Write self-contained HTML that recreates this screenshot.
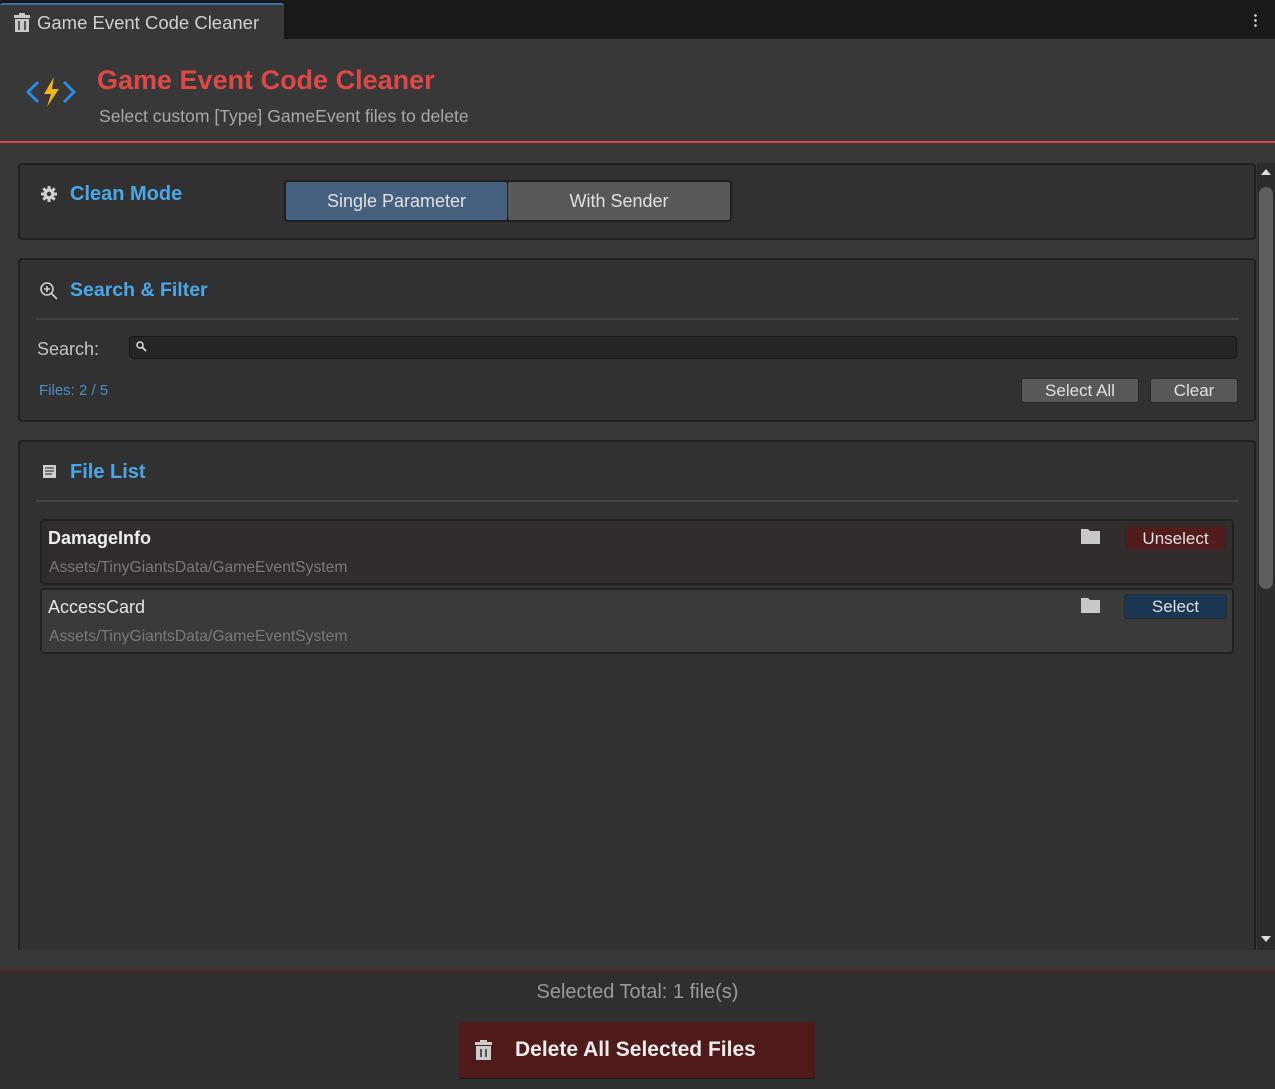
<!DOCTYPE html>
<html><head><meta charset="utf-8"><style>
*{box-sizing:border-box;margin:0;padding:0}
body{width:1275px;height:1089px;background:#383838;font-family:"Liberation Sans",sans-serif;position:relative;overflow:hidden;color:#d2d2d2}
.a{position:absolute}
.panel{position:absolute;left:18px;width:1238px;background:#313131;border:2px solid #202020;border-radius:4px}
.h{color:#4aa8e8;font-weight:bold;font-size:20px}
.btn{position:absolute;background:#585858;border:1px solid #2a2a2a;border-radius:3px;color:#e0e0e0;font-size:17px;text-align:center}
</style></head><body>
<div class="a" style="left:0;top:0;width:1275px;height:39px;background:#191919"></div>
<div class="a" style="left:0;top:3px;width:284px;height:36px;background:#383838;border-top:2px solid #3d6fa8;border-radius:3px 3px 0 0"></div>
<svg class="a" style="left:13px;top:13px" width="18" height="19" viewBox="0 0 18 19"><rect x="1" y="2" width="16" height="3" fill="#c8c8c8"/><rect x="6" y="0" width="6" height="2" fill="#c8c8c8"/><rect x="2" y="6" width="14" height="13" fill="#c8c8c8"/><rect x="5" y="8" width="2" height="9" fill="#555"/><rect x="11" y="8" width="2" height="9" fill="#555"/></svg>
<div class="a" style="left:37px;top:12px;font-size:18.5px;color:#d0d0d0">Game Event Code Cleaner</div>
<div class="a" style="left:1254px;top:13px;width:3px;height:15px;background:radial-gradient(circle,#ccc 1.2px,transparent 1.5px) 0 0/3px 5px"></div>

<svg class="a" style="left:26px;top:76px" width="50" height="32" viewBox="0 0 50 32"><path d="M12 6 L2 16 L12 26" stroke="#2a8be0" stroke-width="3" fill="none"/><path d="M38 6 L48 16 L38 26" stroke="#2a8be0" stroke-width="3" fill="none"/><path d="M28 1 L18 18 H25 L21 31 L33 13 H26 Z" fill="#f5b21f"/></svg>
<div class="a" style="left:97px;top:65px;font-size:27px;font-weight:bold;color:#e04848">Game Event Code Cleaner</div>
<div class="a" style="left:99px;top:106px;font-size:17.6px;color:#a8a8a8">Select custom [Type] GameEvent files to delete</div>
<div class="a" style="left:0;top:141px;width:1275px;height:2px;background:#d84646"></div>

<div class="panel" style="top:163px;height:77px"></div>
<svg class="a" style="left:41px;top:186px" width="16" height="16" viewBox="0 0 16 16"><circle cx="8" cy="8" r="5.5" fill="#cfcfcf"/><g stroke="#cfcfcf" stroke-width="3"><path d="M8 0V16M0 8H16M2.3 2.3L13.7 13.7M13.7 2.3L2.3 13.7"/></g><circle cx="8" cy="8" r="2.2" fill="#313131"/></svg>
<div class="a h" style="left:70px;top:183px">Clean Mode</div>
<div class="a" style="left:284px;top:180px;width:448px;height:42px;background:#1e1e1e;border-radius:3px"></div>
<div class="a" style="left:286px;top:182px;width:221px;height:38px;background:#46607f;border-radius:2px;color:#e0e0e0;font-size:18px;text-align:center;line-height:38px">Single Parameter</div>
<div class="a" style="left:508px;top:182px;width:222px;height:38px;background:#585858;border-radius:2px;color:#e0e0e0;font-size:18px;text-align:center;line-height:38px">With Sender</div>

<div class="panel" style="top:258px;height:164px"></div>
<svg class="a" style="left:39px;top:281px" width="20" height="20" viewBox="0 0 20 20"><circle cx="8" cy="8" r="6" stroke="#cfcfcf" stroke-width="1.6" fill="none"/><path d="M12.5 12.5L18 18M8 5V11M5 8H11" stroke="#cfcfcf" stroke-width="1.6"/></svg>
<div class="a h" style="left:70px;top:279px;font-size:19.5px">Search &amp; Filter</div>
<div class="a" style="left:36px;top:318px;width:1203px;height:2px;background:#444"></div>
<div class="a" style="left:37px;top:339px;font-size:18px;color:#c4c4c4">Search:</div>
<div class="a" style="left:129px;top:336px;width:1108px;height:23px;background:#252525;border:1px solid #161616;border-radius:4px"></div>
<svg class="a" style="left:136px;top:341px" width="11" height="11" viewBox="0 0 11 11"><circle cx="4" cy="4" r="3" stroke="#ddd" stroke-width="1.5" fill="none"/><path d="M6 6L10 10" stroke="#ddd" stroke-width="1.8"/></svg>
<div class="a" style="left:39px;top:382px;font-size:15px;color:#4d8fd0">Files: 2 / 5</div>
<div class="btn" style="left:1021px;top:378px;width:118px;height:25px;line-height:24px">Select All</div>
<div class="btn" style="left:1150px;top:378px;width:88px;height:25px;line-height:24px">Clear</div>

<div class="panel" style="top:440px;height:520px;border-bottom:none"></div>
<svg class="a" style="left:43px;top:465px" width="13" height="13" viewBox="0 0 13 13"><rect width="13" height="13" fill="#cfcfcf"/><path d="M2 3H11M2 6H11M2 9H9" stroke="#444" stroke-width="1.3"/></svg>
<div class="a h" style="left:70px;top:461px">File List</div>
<div class="a" style="left:36px;top:500px;width:1203px;height:2px;background:#444"></div>

<div class="a" style="left:40px;top:519px;width:1194px;height:66px;background:#322c2c;border:2px solid #222;border-radius:4px"></div>
<div class="a" style="left:48px;top:528px;font-size:18px;font-weight:bold;color:#eee">DamageInfo</div>
<div class="a" style="left:49px;top:559px;font-size:15.7px;color:#7a7a7a">Assets/TinyGiantsData/GameEventSystem</div>
<svg class="a" style="left:1081px;top:529px" width="19" height="15" viewBox="0 0 19 15"><path d="M0 0H7L9 2H19V15H0Z" fill="#c8c8c8"/></svg>
<div class="btn" style="left:1125px;top:526px;width:101px;height:24px;line-height:23px;background:#531c1c">Unselect</div>

<div class="a" style="left:40px;top:588px;width:1194px;height:66px;background:#3a3a3a;border:2px solid #222;border-radius:4px"></div>
<div class="a" style="left:48px;top:597px;font-size:18px;color:#e4e4e4">AccessCard</div>
<div class="a" style="left:49px;top:628px;font-size:15.7px;color:#7a7a7a">Assets/TinyGiantsData/GameEventSystem</div>
<svg class="a" style="left:1081px;top:598px" width="19" height="15" viewBox="0 0 19 15"><path d="M0 0H7L9 2H19V15H0Z" fill="#c8c8c8"/></svg>
<div class="btn" style="left:1124px;top:594px;width:103px;height:25px;line-height:24px;background:#1b3652">Select</div>

<div class="a" style="left:1257px;top:163px;width:18px;height:787px;background:#2c2c2c"></div>
<div class="a" style="left:1259px;top:187px;width:14px;height:402px;background:#5e5e5e;border-radius:7px"></div>
<div class="a" style="left:1261px;top:169px;width:0;height:0;border-left:5px solid transparent;border-right:5px solid transparent;border-bottom:6px solid #ddd"></div>
<div class="a" style="left:1261px;top:936px;width:0;height:0;border-left:5px solid transparent;border-right:5px solid transparent;border-top:6px solid #ddd"></div>

<div class="a" style="left:0;top:950px;width:1275px;height:20px;background:#383838"></div>
<div class="a" style="left:0;top:969px;width:1275px;height:120px;background:#2f2f2f;border-top:2px solid #552626"></div>
<div class="a" style="left:0;top:981px;width:1275px;text-align:center;font-size:20px;color:#9a9a9a">Selected Total: 1 file(s)</div>
<div class="a" style="left:459px;top:1022px;width:356px;height:56px;background:#4f1a1a;border-radius:2px;box-shadow:0 1px 0 #1a1a1a"></div>
<svg class="a" style="left:474px;top:1040px" width="19" height="20" viewBox="0 0 19 20"><rect x="1" y="2" width="17" height="3" fill="#ccc"/><rect x="6" y="0" width="7" height="2" fill="#ccc"/><rect x="2" y="6" width="15" height="14" fill="#ccc"/><rect x="6" y="9" width="2" height="8" fill="#555"/><rect x="11" y="9" width="2" height="8" fill="#555"/></svg>
<div class="a" style="left:515px;top:1038px;font-size:21px;font-weight:bold;color:#ececec">Delete All Selected Files</div>
</body></html>
